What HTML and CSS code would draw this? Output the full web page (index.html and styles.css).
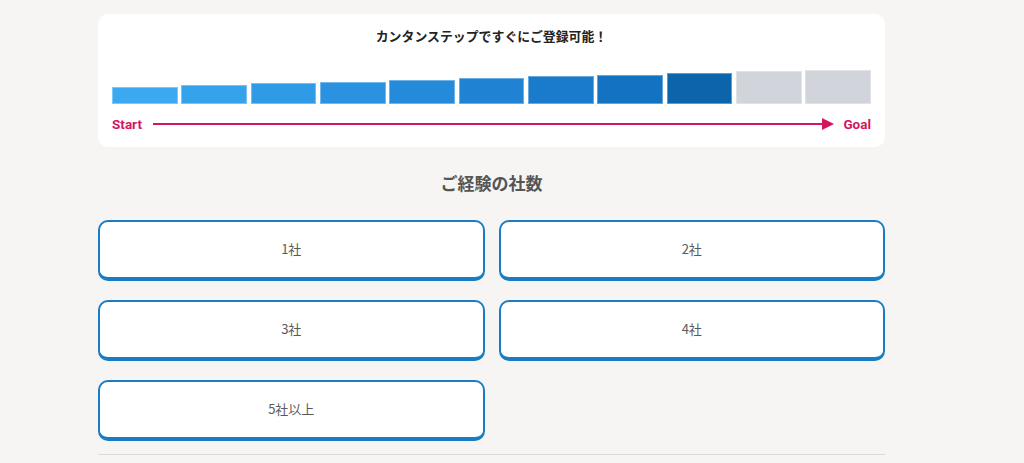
FILE: index.html
```html
<!DOCTYPE html>
<html lang="ja">
<head>
<meta charset="utf-8">
<link rel="stylesheet" href="styles.css">
</head>
<body>
<main class="wrap">
  <section class="card">
    <p class="card-title">カンタンステップですぐにご登録可能！</p>
    <div class="bars">
      <span class="bar" style="height:17px;background:#3ba9f1"></span>
      <span class="bar" style="height:19px;background:#35a2ec"></span>
      <span class="bar" style="height:21px;background:#2f9ae6"></span>
      <span class="bar" style="height:22px;background:#2a92e0"></span>
      <span class="bar" style="height:24px;background:#248ad9"></span>
      <span class="bar" style="height:26px;background:#1f82d2"></span>
      <span class="bar" style="height:28px;background:#1a7acb"></span>
      <span class="bar" style="height:29px;background:#1472c2"></span>
      <span class="bar" style="height:31px;background:#0c64aa"></span>
      <span class="bar grey" style="height:33px"></span>
      <span class="bar grey" style="height:34px"></span>
    </div>
    <div class="track">
      <span class="label">Start</span>
      <span class="line"></span>
      <span class="head"></span>
      <span class="label goal">Goal</span>
    </div>
  </section>
  <h2 class="heading">ご経験の社数</h2>
  <div class="choices">
    <button class="choice">1社</button>
    <button class="choice">2社</button>
    <button class="choice">3社</button>
    <button class="choice">4社</button>
    <button class="choice">5社以上</button>
  </div>
  <hr class="divider">
</main>
</body>
</html>
```
FILE: styles.css
```css
html, body {
  margin: 0;
  padding: 0;
  background: #f6f5f3;
  font-family: "Noto Sans CJK JP", "Noto Sans", sans-serif;
}
.wrap {
  width: 787px;
  margin: 0 0 0 98px;
  padding-top: 14px;
}
.card {
  background: #fff;
  border-radius: 10px;
  padding: 13px 14px 14px;
  height: 133px;
  box-sizing: border-box;
}
.card-title {
  margin: 0;
  text-align: center;
  font-size: 12.9px;
  line-height: 18px;
  font-weight: 700;
  color: #222;
}
.bars {
  display: flex;
  align-items: flex-end;
  gap: 3.5px;
  height: 34px;
  margin-top: 25px;
}
.bar {
  flex: 1;
  display: block;
  box-sizing: border-box;
  border: 1px solid rgba(255,255,255,0.35);
}
.bar.grey {
  background: #d1d5db;
}
.track {
  display: flex;
  align-items: center;
  margin-top: 12px;
  height: 16px;
}
.label {
  font-family: Roboto, "Liberation Sans", sans-serif;
  font-weight: 700;
  font-size: 13.5px;
  color: #d4155f;
}
.line {
  flex: 1;
  height: 2px;
  background: #d4155f;
  margin-left: 11px;
}
.head {
  width: 0;
  height: 0;
  border-top: 6.5px solid transparent;
  border-bottom: 6.5px solid transparent;
  border-left: 12px solid #d4155f;
  margin-right: 9px;
}
.heading {
  margin: 24px 0 0;
  text-align: center;
  font-size: 17px;
  line-height: 24px;
  font-weight: 700;
  color: #555;
}
.choices {
  display: grid;
  grid-template-columns: 1fr 1fr;
  column-gap: 14px;
  row-gap: 19px;
  margin-top: 25px;
}
.choice {
  box-sizing: border-box;
  height: 61px;
  background: #fff;
  border: 2px solid #1a7cc4;
  border-bottom-width: 4px;
  border-radius: 10px;
  font-family: "Noto Sans CJK JP", "Noto Sans", sans-serif;
  font-size: 13px;
  color: #5a5a5a;
  padding: 0 0 2px;
}
.divider {
  margin: 13px 0 0;
  border: 0;
  border-top: 1px solid #dcdcdc;
}
```
